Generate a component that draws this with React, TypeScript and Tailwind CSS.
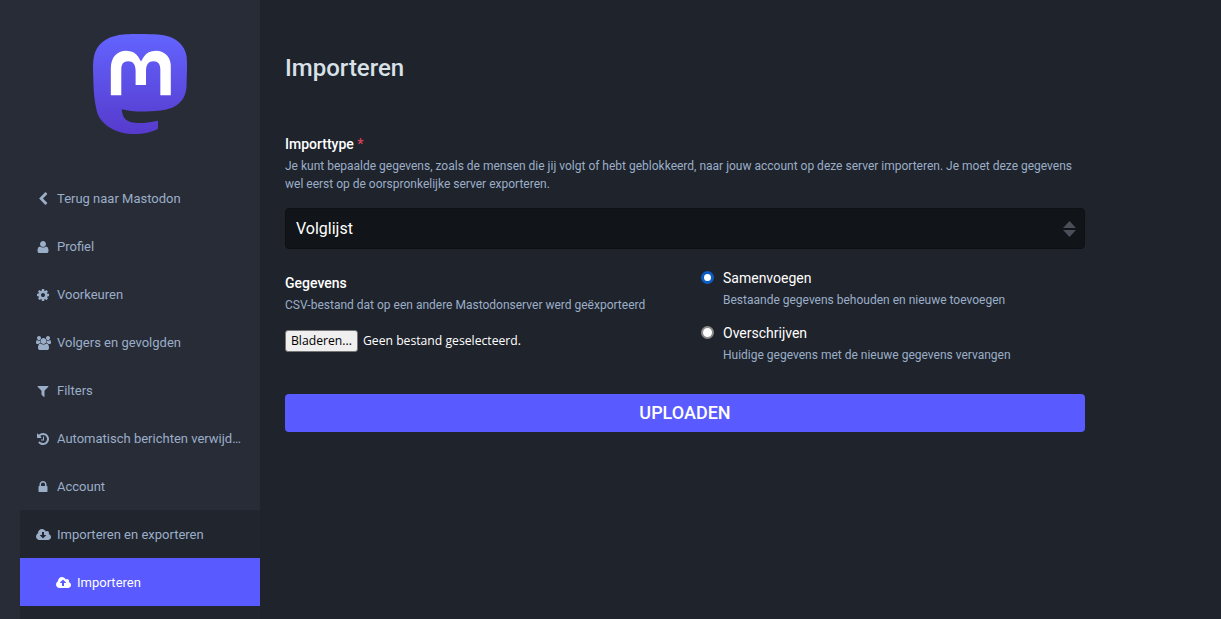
import { useId } from 'react';

// Font Awesome 4 glyphs, the set the reference uses
const ICONS = {
  chevronLeft: {
    box: '0 0 1792 1792',
    d: 'M1427 301l-531 531 531 531q19 19 19 45t-19 45l-166 166q-19 19-45 19t-45-19l-742-742q-19-19-19-45t19-45l742-742q19-19 45-19t45 19l166 166q19 19 19 45t-19 45z',
  },
  user: {
    box: '0 0 1792 1792',
    d: 'M1600 1405q0 120-73 189.5t-194 69.5h-874q-121 0-194-69.5t-73-189.5q0-53 3.5-103.5t14-109 26.5-108.5 43-97.5 62-81 85.5-53.5 111.5-20q9 0 42 21.5t74.5 48 108 48 133.5 21.5 133.5-21.5 108-48 74.5-48 42-21.5q61 0 111.5 20t85.5 53.5 62 81 43 97.5 26.5 108.5 14 109 3.5 103.5zm-320-893q0 159-112.5 271.5t-271.5 112.5-271.5-112.5-112.5-271.5 112.5-271.5 271.5-112.5 271.5 112.5 112.5 271.5z',
  },
  cog: {
    box: '0 0 1792 1792',
    d: 'M1152 896q0-106-75-181t-181-75-181 75-75 181 75 181 181 75 181-75 75-181zm512-109v222q0 12-8 23t-20 13l-185 28q-19 54-39 91 35 50 107 138 10 12 10 25t-9 23q-27 37-99 108t-94 71q-12 0-26-9l-138-108q-44 23-91 38-16 136-29 186-7 28-36 28h-222q-14 0-24.5-8.5t-11.5-21.5l-28-184q-49-16-90-37l-141 107q-10 9-25 9-14 0-25-11-126-114-165-168-7-10-7-23 0-12 8-23 15-21 51-66.5t54-70.5q-27-50-41-99l-183-27q-13-2-21-12.5t-8-23.5v-222q0-12 8-23t19-13l186-28q14-46 39-92-40-57-107-138-10-12-10-24 0-10 9-23 26-36 98.5-107.5t94.5-71.5q13 0 26 10l138 107q44-23 91-38 16-136 29-186 7-28 36-28h222q14 0 24.5 8.5t11.5 21.5l28 184q49 16 90 37l142-107q9-9 24-9 13 0 25 10 129 119 165 170 7 8 7 22 0 12-8 23-15 21-51 66.5t-54 70.5q26 50 41 98l183 28q13 2 21 12.5t8 23.5z',
  },
  users: {
    box: '0 0 1920 1792',
    d: 'M593 896q-162 5-265 128h-134q-82 0-138-40.5t-56-118.5q0-353 124-353 6 0 43.5 21t97.5 42.5 119 21.5q67 0 133-23-5 37-5 66 0 139 81 256zm1071 637q0 120-73 189.5t-194 69.5h-874q-121 0-194-69.5t-73-189.5q0-53 3.5-103.5t14-109 26.5-108.5 43-97.5 62-81 85.5-53.5 111.5-20q10 0 43 21.5t73 48 107 48 135 21.5 135-21.5 107-48 73-48 43-21.5q61 0 111.5 20t85.5 53.5 62 81 43 97.5 26.5 108.5 14 109 3.5 103.5zm-1024-1277q0 106-75 181t-181 75-181-75-75-181 75-181 181-75 181 75 75 181zm704 384q0 159-112.5 271.5t-271.5 112.5-271.5-112.5-112.5-271.5 112.5-271.5 271.5-112.5 271.5 112.5 112.5 271.5zm576 225q0 78-56 118.5t-138 40.5h-134q-103-123-265-128 81-117 81-256 0-29-5-66 66 23 133 23 59 0 119-21.5t97.5-42.5 43.5-21q124 0 124 353zm-128-609q0 106-75 181t-181 75-181-75-75-181 75-181 181-75 181 75 75 181z',
  },
  filter: {
    box: '0 0 1792 1792',
    d: 'M1595 295q17 41-14 70l-493 493v742q0 42-39 59-13 5-25 5-27 0-45-19l-256-256q-19-19-19-45v-486l-493-493q-31-29-14-70 17-39 59-39h1280q42 0 59 39z',
  },
  history: {
    box: '0 0 1792 1792',
    d: 'M1664 896q0 156-61 298t-164 245-245 164-298 61q-172 0-327-72.5t-264-204.5q-7-10-6.5-22.5t8.5-20.5l137-138q10-9 25-9 16 2 23 12 73 95 179 147t225 52q104 0 198.5-40.5t163.5-109.5 109.5-163.5 40.5-198.5-40.5-198.5-109.5-163.5-163.5-109.5-198.5-40.5q-98 0-188 35.5t-160 101.5l137 138q31 30 14 69-17 40-59 40h-448q-26 0-45-19t-19-45v-448q0-42 40-59 39-17 69 14l130 129q107-101 244.5-156.5t284.5-55.5q156 0 298 61t245 164 164 245 61 298zm-640-288v448q0 14-9 23t-23 9h-320q-14 0-23-9t-9-23v-64q0-14 9-23t23-9h224v-352q0-14 9-23t23-9h64q14 0 23 9t9 23z',
  },
  lock: {
    box: '0 0 1792 1792',
    d: 'M640 768h512v-192q0-106-75-181t-181-75-181 75-75 181v192zm832 96v576q0 40-28 68t-68 28h-960q-40 0-68-28t-28-68v-576q0-40 28-68t68-28h32v-192q0-184 132-316t316-132 316 132 132 316v192h32q40 0 68 28t28 68z',
  },
  cloudDownload: {
    box: '0 0 1920 1792',
    d: 'M1280 928q0-14-9-23t-23-9h-224v-352q0-13-9.5-22.5t-22.5-9.5h-192q-13 0-22.5 9.5t-9.5 22.5v352h-224q-13 0-22.5 9.5t-9.5 22.5q0 14 9 23l352 352q9 9 23 9t23-9l351-351q10-12 10-24zm640 224q0 159-112.5 271.5t-271.5 112.5h-1088q-185 0-316.5-131.5t-131.5-316.5q0-130 70-240t188-165q-2-30-2-43 0-212 150-362t362-150q156 0 285.5 87t188.5 231q71-62 166-62 106 0 181 75t75 181q0 76-41 138 130 31 213.5 135.5t83.5 238.5z',
  },
  cloudUpload: {
    box: '0 0 1920 1792',
    d: 'M1280 864q0-14-9-23l-352-352q-9-9-23-9t-23 9l-351 351q-10 12-10 24 0 14 9 23t23 9h224v352q0 13 9.5 22.5t22.5 9.5h192q13 0 22.5-9.5t9.5-22.5v-352h224q13 0 22.5-9.5t9.5-22.5zm640 288q0 159-112.5 271.5t-271.5 112.5h-1088q-185 0-316.5-131.5t-131.5-316.5q0-130 70-240t188-165q-2-30-2-43 0-212 150-362t362-150q156 0 285.5 87t188.5 231q71-62 166-62 106 0 181 75t75 181q0 76-41 138 130 31 213.5 135.5t83.5 238.5z',
  },
};

function MastodonLogo() {
  const gradientId = useId();
  return (
    <svg viewBox="0 0.7 74 77.6" preserveAspectRatio="none" className="h-[100px] w-[94px]" fill="none">
      <defs>
        <linearGradient id={gradientId} x1="37" y1="0" x2="37" y2="79" gradientUnits="userSpaceOnUse">
          <stop stopColor="#6364FF" />
          <stop offset="1" stopColor="#563ACC" />
        </linearGradient>
      </defs>
      <path
        fill={`url(#${gradientId})`}
        d="M73.7014 17.9592C72.5616 9.62034 65.1774 3.04876 56.424 1.77536C54.9472 1.56019 49.3517 0.7771 36.3901 0.7771H36.2933C23.3281 0.7771 20.5465 1.56019 19.0697 1.77536C10.56 3.01348 2.78877 8.91838 0.903306 17.356C-0.00357857 21.5113 -0.100361 26.1181 0.068112 30.3439C0.308275 36.404 0.354874 42.4535 0.91406 48.489C1.30064 52.498 1.97502 56.4751 2.93215 60.3905C4.72441 67.6217 11.9795 73.6395 19.0876 76.0945C26.6979 78.6548 34.8821 79.0799 42.724 77.3221C43.5866 77.1245 44.4398 76.8953 45.2833 76.6342C47.1867 76.0381 49.4199 75.3714 51.0616 74.2003C51.0841 74.1839 51.1026 74.1627 51.1156 74.1382C51.1286 74.1138 51.1359 74.0868 51.1368 74.0592V68.2108C51.1364 68.185 51.1302 68.1596 51.1185 68.1365C51.1069 68.1134 51.0902 68.0932 51.0695 68.0773C51.0489 68.0614 51.0249 68.0503 50.9994 68.0448C50.9738 68.0392 50.9473 68.0394 50.9218 68.0453C45.8976 69.2301 40.7491 69.8239 35.5836 69.8143C26.694 69.8143 24.3031 65.6458 23.6184 63.9104C23.0681 62.4107 22.7186 60.8466 22.5789 59.2582C22.5775 59.2315 22.5825 59.2049 22.5934 59.1805C22.6043 59.1561 22.621 59.1347 22.6419 59.1179C22.6629 59.1012 22.6876 59.0896 22.714 59.0842C22.7404 59.0788 22.7678 59.0796 22.7938 59.0867C27.7345 60.2597 32.7989 60.8535 37.8813 60.8555C39.1036 60.8555 40.3223 60.8555 41.5447 60.8232C46.6562 60.6808 52.0437 60.4214 57.0728 59.4451C57.1983 59.4202 57.3237 59.3988 57.4313 59.3667C65.3638 57.8592 72.9128 53.1273 73.6799 41.1452C73.7086 40.6735 73.7803 36.2037 73.7803 35.7141C73.7839 34.0504 74.3216 23.9112 73.7014 17.9592Z"
      />
      <path
        fill="#fff"
        d="M61.2474 27.5457V48.2674H53.0112V28.1549C53.0112 23.9206 51.2427 21.7612 47.6517 21.7612C43.7089 21.7612 41.7374 24.2977 41.7374 29.3113V40.2467H33.5443V29.3113C33.5443 24.2977 31.5746 21.7612 27.6318 21.7612C24.0408 21.7612 22.2723 23.9206 22.2723 28.1549V48.2674H14.0361V27.5457C14.0361 23.3114 15.1189 19.9468 17.2846 17.4713C19.5388 14.9922 22.4925 13.7176 26.1575 13.7176C30.3988 13.7176 33.6069 15.3458 35.7364 18.6004L37.7995 22.0549L39.8661 18.6004C41.9956 15.3458 45.2037 13.7176 49.445 13.7176C53.1082 13.7176 56.0619 14.9922 58.3161 17.4713C60.4818 19.9468 61.5646 23.3114 61.2474 27.5457Z"
      />
    </svg>
  );
}

function NavItem({ icon, label, nested, active }: { icon: keyof typeof ICONS; label: string; nested?: boolean; active?: boolean }) {
  const glyph = ICONS[icon];
  return (
    <a
      className={`flex h-12 items-center gap-[6px] pt-[2px] pr-[18px] text-[13px] ${nested ? 'pl-[35px]' : 'pl-[15px]'} ${
        active ? 'bg-[#595aff] text-white' : 'text-[#9baec8]'
      }`}
    >
      <span className="flex w-4 shrink-0 justify-center">
        <svg viewBox={glyph.box} className={`h-[14px] shrink-0 ${glyph.box === '0 0 1920 1792' ? 'w-[15px]' : 'w-[14px]'}`} fill="currentColor">
          <path d={glyph.d} />
        </svg>
      </span>
      <span className="truncate">{label}</span>
    </a>
  );
}

function Radio({ checked, label, hint }: { checked?: boolean; label: string; hint: string }) {
  return (
    <div className="flex gap-[9px]">
      <span
        className={`mt-px h-[13px] w-[13px] shrink-0 rounded-full bg-white ${
          checked ? 'border-[3px] border-[#0b5dc4]' : 'border-2 border-[#8a8a8a]'
        }`}
      />
      <div>
        <div className="text-sm leading-[17px] text-white">{label}</div>
        <div className="mt-[5px] text-xs leading-4 text-[#9baec8]">{hint}</div>
      </div>
    </div>
  );
}

export default function App() {
  return (
    <div className="flex h-[619px] overflow-hidden bg-[#1f232b] font-['Roboto',sans-serif]">
      {/* Sidebar */}
      <aside className="w-[260px] shrink-0 bg-[#282c37] pl-5">
        <div className="flex h-[174px] justify-center pt-[34px]">
          <MastodonLogo />
        </div>
        <nav>
          <NavItem icon="chevronLeft" label="Terug naar Mastodon" />
          <NavItem icon="user" label="Profiel" />
          <NavItem icon="cog" label="Voorkeuren" />
          <NavItem icon="users" label="Volgers en gevolgden" />
          <NavItem icon="filter" label="Filters" />
          <NavItem icon="history" label="Automatisch berichten verwijderen" />
          <NavItem icon="lock" label="Account" />
          <div className="bg-[#21252e]">
            <NavItem icon="cloudDownload" label="Importeren en exporteren" />
            <NavItem icon="cloudUpload" label="Importeren" nested active />
            <div className="h-5" />
          </div>
        </nav>
      </aside>

      {/* Content */}
      <main className="box-content w-[800px] pl-[25px]">
        <h1 className="mt-[53px] text-2xl leading-[30px] font-medium text-[#d9e1e8]">Importeren</h1>

        <label className="mt-[53px] block text-sm leading-[17px] font-medium text-white">
          Importtype <span className="text-[#df405a]">*</span>
        </label>
        <p className="mt-1 text-xs leading-[18px] text-[#9baec8]">
          Je kunt bepaalde gegevens, zoals de mensen die jij volgt of hebt geblokkeerd, naar jouw account op deze server importeren. Je moet deze gegevens wel eerst op de oorspronkelijke server exporteren.
        </p>

        <div className="mt-[15px] flex h-[41px] items-center justify-between rounded border border-[#0e1014] bg-[#111418] pr-[8px] pl-[10px] text-base text-white">
          <span>Volglijst</span>
          <svg viewBox="0 0 13 16" className="h-4 w-[13px]" fill="#4a4e58">
            <path d="M6.5 0 13 7H0Z" />
            <path d="M0 9H13L6.5 16Z" />
          </svg>
        </div>

        <div className="mt-[21px] grid grid-cols-2 gap-x-8">
          <div className="pt-[5px]">
            <div className="text-sm leading-[17px] font-medium text-white">Gegevens</div>
            <p className="mt-1 text-xs leading-[18px] text-[#9baec8]">CSV-bestand dat op een andere Mastodonserver werd geëxporteerd</p>
            <div className="mt-4 flex items-center gap-[5px] font-['Open_Sans',sans-serif] text-[12.2px] text-white">
              <button className="h-[22px] rounded-[3px] border border-[#767676] bg-[#efefef] px-[5px] text-black">Bladeren...</button>
              <span>Geen bestand geselecteerd.</span>
            </div>
          </div>
          <div className="flex flex-col gap-[17px]">
            <Radio checked label="Samenvoegen" hint="Bestaande gegevens behouden en nieuwe toevoegen" />
            <Radio label="Overschrijven" hint="Huidige gegevens met de nieuwe gegevens vervangen" />
          </div>
        </div>

        <button className="mt-[31px] h-[38px] w-full rounded bg-[#595aff] text-lg font-medium text-white">UPLOADEN</button>
      </main>
    </div>
  );
}
